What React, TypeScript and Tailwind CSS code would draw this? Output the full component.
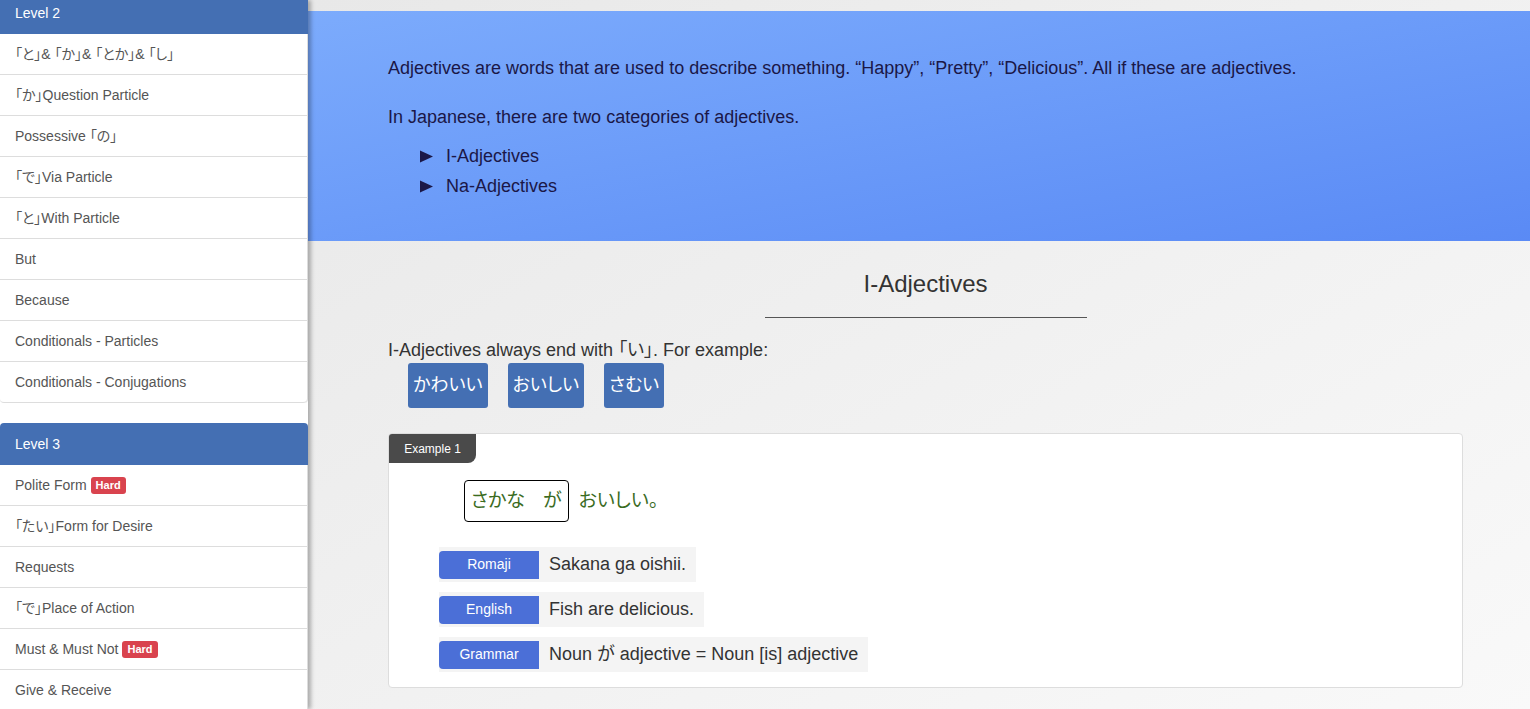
import React from 'react';

type NavItem = { label: string; hard?: boolean };

const level2: NavItem[] = [
  { label: '「と」& 「か」& 「とか」& 「し」' },
  { label: '「か」Question Particle' },
  { label: 'Possessive 「の」' },
  { label: '「で」Via Particle' },
  { label: '「と」With Particle' },
  { label: 'But' },
  { label: 'Because' },
  { label: 'Conditionals - Particles' },
  { label: 'Conditionals - Conjugations' },
];

const level3: NavItem[] = [
  { label: 'Polite Form', hard: true },
  { label: '「たい」Form for Desire' },
  { label: 'Requests' },
  { label: '「で」Place of Action' },
  { label: 'Must & Must Not', hard: true },
  { label: 'Give & Receive' },
];

const examples = ['かわいい', 'おいしい', 'さむい'];

const rows = [
  { label: 'Romaji', value: 'Sakana ga oishii.' },
  { label: 'English', value: 'Fish are delicious.' },
  { label: 'Grammar', value: 'Noun が adjective = Noun [is] adjective' },
];

const NavList: React.FC<{ items: NavItem[]; roundedBottom?: boolean }> = ({ items, roundedBottom }) => (
  <div className={`border-r border-[#ddd] ${roundedBottom ? 'rounded-b-[4px]' : ''}`}>
    {items.map((item, index) => (
      <div
        key={index}
        className={`flex h-[41px] items-center gap-[4px] border-b border-[#ddd] px-[15px] text-[14px] text-[#555] ${
          roundedBottom && index === items.length - 1 ? 'rounded-b-[4px]' : ''
        }`}
      >
        <span>{item.label}</span>
        {item.hard && (
          <span className="rounded-[3px] bg-[#d9434e] px-[5px] py-[1px] text-[11px] font-bold leading-[15px] text-white">Hard</span>
        )}
      </div>
    ))}
  </div>
);

const Triangle = () => (
  <svg width="13" height="13" viewBox="0 0 13 13" className="shrink-0">
    <polygon points="0,0.5 13,6.5 0,12.5" fill="#1b1747" />
  </svg>
);

export default function App() {
  return (
    <div className="flex h-[709px] w-[1530px] overflow-hidden font-['Liberation_Sans','Noto_Sans_CJK_JP',sans-serif] [font-feature-settings:'palt']">
      {/* sidebar */}
      <aside className="relative z-10 w-[308px] shrink-0 bg-white shadow-[3px_0_4px_rgba(0,0,0,0.28)]">
        <div className="-mt-[8px]">
          <div className="flex h-[42px] items-center rounded-tr-[4px] bg-[#446fb3] px-[15px] pt-[1px] text-[14px] text-white">Level 2</div>
          <NavList items={level2} roundedBottom />
        </div>
        <div className="mt-[20px]">
          <div className="flex h-[42px] items-center rounded-t-[4px] bg-[#446fb3] px-[15px] text-[14px] text-white">Level 3</div>
          <NavList items={level3} />
        </div>
      </aside>

      {/* main */}
      <main className="flex-1 bg-gradient-to-br from-[#e8e8e8] to-[#f9f9f9] pt-[11px]">
        <section className="h-[230px] bg-gradient-to-br from-[#7cabfc] to-[#5a8af5] pl-[80px] pt-[45px] text-[18px] leading-[24px] text-[#1b1747]">
          <p>Adjectives are words that are used to describe something. “Happy”, “Pretty”, “Delicious”. All if these are adjectives.</p>
          <p className="mt-[25px]">In Japanese, there are two categories of adjectives.</p>
          <ul className="mt-[12px] pl-[32px]">
            <li className="flex h-[30px] items-center gap-[13px]">
              <Triangle />
              <span>I-Adjectives</span>
            </li>
            <li className="flex h-[30px] items-center gap-[13px]">
              <Triangle />
              <span>Na-Adjectives</span>
            </li>
          </ul>
        </section>

        <section className="ml-[80px] mr-[67px] pt-[26px] text-[#333]">
          <div className="flex flex-col items-center">
            <h2 className="text-[24px] leading-[34px] text-[#333]">I-Adjectives</h2>
            <div className="mt-[16px] h-px w-[322px] bg-[#555]" />
          </div>

          <p className="mt-[20px] text-[18px] leading-[24px]">I-Adjectives always end with 「い」. For example:</p>
          <div className="mt-[1px] flex gap-[20px] pl-[20px]">
            {examples.map((word) => (
              <span key={word} className="flex h-[45px] items-center rounded-[3px] bg-[#446fb3] px-[5px] text-[18px] text-white">
                {word}
              </span>
            ))}
          </div>

          <div className="mt-[25px] h-[255px] rounded-[4px] border border-[#ddd] bg-white">
            <div className="flex h-[29px] w-[87px] items-center justify-center rounded-tl-[3px] rounded-br-[8px] bg-[#4a4a4a] text-[12px] text-white">
              Example 1
            </div>
            <div className="ml-[75px] mt-[17px] flex items-center gap-[10px] text-[19px] text-[#3b6c1f]">
              <span className="flex h-[42px] items-center rounded-[4px] border border-black px-[6px]">
                <span>さかな</span>
                <span className="ml-[18px]">が</span>
              </span>
              <span>おいしい。</span>
            </div>
            <div className="ml-[50px] mt-[25px] flex flex-col items-start gap-[10px]">
              {rows.map((row) => (
                <div key={row.label} className="flex h-[35px] items-center bg-[#f4f4f4] pr-[10px]">
                  <span className="flex h-[28px] w-[100px] items-center justify-center rounded-l-[4px] bg-[#4b6fd7] text-[14px] text-white">
                    {row.label}
                  </span>
                  <span className="pl-[10px] text-[18px] text-[#333]">{row.value}</span>
                </div>
              ))}
            </div>
          </div>
        </section>
      </main>
    </div>
  );
}
